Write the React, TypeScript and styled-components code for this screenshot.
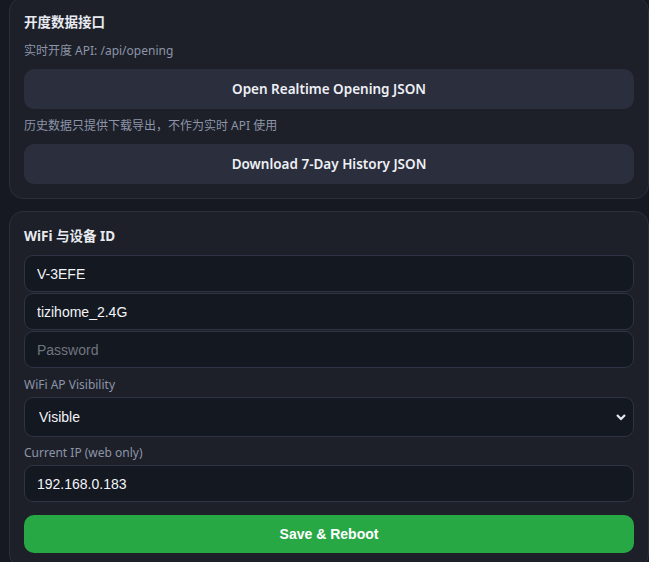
import styled, { createGlobalStyle } from "styled-components";

const GlobalStyle = createGlobalStyle`
  html, body {
    margin: 0;
    padding: 0;
    background: #161922;
  }
  body {
    font-family: "Noto Sans", "Noto Sans CJK SC", sans-serif;
    color: #e6e8ee;
  }
`;

const Page = styled.div`
  display: flex;
  flex-direction: column;
  gap: 12px;
  padding: 0 0 20px 9px;
  margin-top: -3px;
`;

const Card = styled.section`
  display: flex;
  flex-direction: column;
  background: #1d2029;
  border: 1px solid #2b2f3c;
  border-radius: 14px;
  padding: 14px;
`;

const Title = styled.h3`
  margin: 0;
  font-size: 13.5px;
  line-height: 20px;
  font-weight: 700;
  color: #e8eaf0;
  font-family: "Noto Sans", "Noto Sans CJK SC", sans-serif;
`;

const Hint = styled.div<{ $top?: number }>`
  margin-top: ${(p) => p.$top ?? 9}px;
  font-size: 12px;
  line-height: 16px;
  color: #8c95a8;
`;

const LinkButton = styled.a`
  display: flex;
  align-items: center;
  justify-content: center;
  height: 40px;
  margin-top: 10px;
  background: #2a2e3d;
  border-radius: 10px;
  color: #eef0f5;
  font-size: 13.5px;
  font-weight: 600;
  text-decoration: none;
  cursor: pointer;
`;

const Fields = styled.div`
  display: flex;
  flex-direction: column;
  gap: 1px;
  margin-top: 9px;
`;

const Input = styled.input`
  box-sizing: border-box;
  width: 100%;
  height: 37px;
  margin: 0;
  padding: 0 12px;
  background: #141821;
  border: 1px solid #2e3445;
  border-radius: 9px;
  color: #f2f4f8;
  font-family: "Liberation Sans", Arial, sans-serif;
  font-size: 14px;
  outline: none;

  &::placeholder {
    color: #70757f;
  }
`;

const Label = styled.div`
  margin-top: 9px;
  margin-bottom: 4px;
  font-size: 12px;
  line-height: 16px;
  color: #8c95a8;
`;

const SelectWrap = styled.div`
  position: relative;
  margin-bottom: -1px;
`;

const Select = styled.select`
  box-sizing: border-box;
  width: 100%;
  height: 40px;
  padding: 0 14px;
  background: #141821;
  border: 1px solid #2e3445;
  border-radius: 9px;
  color: #f2f4f8;
  font-family: "Liberation Sans", Arial, sans-serif;
  font-size: 14px;
  appearance: none;
  outline: none;
`;

const Chevron = styled.svg`
  position: absolute;
  right: 7px;
  top: 15px;
  pointer-events: none;
`;

const SaveButton = styled.button`
  height: 38px;
  margin-top: 13px;
  border: none;
  border-radius: 10px;
  background: #28a745;
  color: #ffffff;
  font-family: "Liberation Sans", Arial, sans-serif;
  font-size: 14px;
  font-weight: 700;
  cursor: pointer;
`;

export default function App() {
  return (
    <>
      <GlobalStyle />
      <Page>
        <Card>
          <Title>开度数据接口</Title>
          <Hint $top={11}>实时开度 API: /api/opening</Hint>
          <LinkButton>Open Realtime Opening JSON</LinkButton>
          <Hint>历史数据只提供下载导出，不作为实时 API 使用</Hint>
          <LinkButton>Download 7-Day History JSON</LinkButton>
        </Card>

        <Card>
          <Title>WiFi 与设备 ID</Title>
          <Fields>
            <Input defaultValue="V-3EFE" />
            <Input defaultValue="tizihome_2.4G" />
            <Input type="password" placeholder="Password" />
          </Fields>
          <Label>WiFi AP Visibility</Label>
          <SelectWrap>
            <Select defaultValue="visible">
              <option value="visible">Visible</option>
              <option value="hidden">Hidden</option>
            </Select>
            <Chevron width="12" height="10" viewBox="0 0 12 10">
              <path d="M2 3l4 4 4-4" fill="none" stroke="#e8eaf0" strokeWidth="2.2" />
            </Chevron>
          </SelectWrap>
          <Label>Current IP (web only)</Label>
          <Input defaultValue="192.168.0.183" readOnly />
          <SaveButton>Save &amp; Reboot</SaveButton>
        </Card>
      </Page>
    </>
  );
}
